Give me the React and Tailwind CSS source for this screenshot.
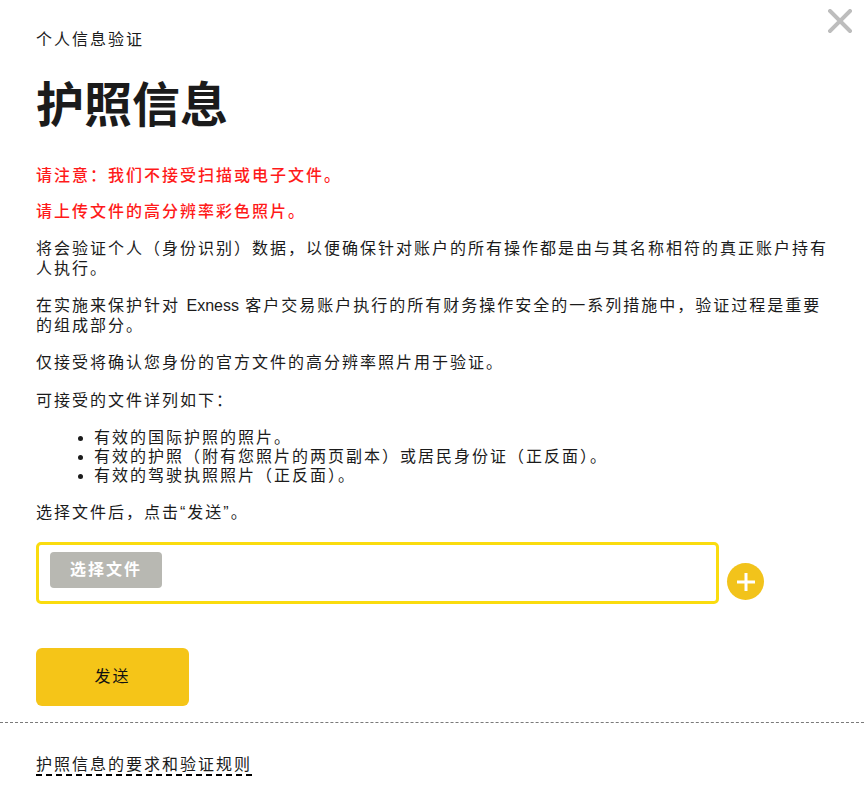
import React from 'react';

export default function App() {
  const textCls = "text-[16px] leading-[20px] tracking-[2px]";

  return (
    <div className="relative min-h-screen bg-white font-['Liberation_Sans','Noto_Sans_CJK_SC',sans-serif] text-[#1b1b1b]">
      {/* Close button */}
      <button className="absolute right-[11px] top-[8px] w-[26px] h-[26px] flex items-center justify-center cursor-pointer">
        <svg width="24" height="24" viewBox="0 0 24 24">
          <path d="M2 2 L22 22 M22 2 L2 22" stroke="#bdbdbd" strokeWidth="4" strokeLinecap="square" />
        </svg>
      </button>

      <div className="pl-9 pr-7 pt-[30px]">
        <p className={textCls}>个人信息验证</p>
        <h1 className="mt-[28px] text-[48px] leading-[56px] font-bold">护照信息</h1>

        <div className={`mt-[32px] flex flex-col gap-[16px] ${textCls}`}>
          <p className="text-[#ff1a1a] font-medium">请注意：我们不接受扫描或电子文件。</p>
          <p className="text-[#ff1a1a] font-medium">请上传文件的高分辨率彩色照片。</p>
          <p className="mt-px">将会验证个人（身份识别）数据，以便确保针对账户的所有操作都是由与其名称相符的真正账户持有人执行。</p>
          <p className="mt-px">在实施来保护针对 <span className="tracking-normal">Exness</span> 客户交易账户执行的所有财务操作安全的一系列措施中，验证过程是重要的组成部分。</p>
          <p className="mt-px">仅接受将确认您身份的官方文件的高分辨率照片用于验证。</p>
          <p className="mt-[2px]">可接受的文件详列如下：</p>
          <ul className="list-disc pl-[58px] leading-[19px] mt-px">
            <li>有效的国际护照的照片。</li>
            <li>有效的护照（附有您照片的两页副本）或居民身份证（正反面）。</li>
            <li>有效的驾驶执照照片（正反面）。</li>
          </ul>
          <p className="mt-[2px]">选择文件后，点击“发送”。</p>
        </div>

        {/* File input row */}
        <div className="mt-[19px] flex items-end gap-[8px]">
          <div className="w-[683px] h-[62px] border-[3px] border-[#FADC0F] rounded-[5px] pl-[11px] pt-[7px]">
            <button className="w-[112px] h-[36px] rounded-[4px] bg-[#B8B8B2] text-white font-bold text-[16px] tracking-[2px] flex items-center justify-center">
              选择文件
            </button>
          </div>
          <button className="mb-[4px] w-[37px] h-[37px] rounded-full bg-[#F2C31B] flex items-center justify-center">
            <svg width="20" height="20" viewBox="0 0 20 20">
              <path d="M10 1 V19 M1 10 H19" stroke="#ffffff" strokeWidth="3" />
            </svg>
          </button>
        </div>

        <button className="mt-[44px] w-[153px] h-[58px] rounded-[6px] bg-[#F5C518] text-[16px] tracking-[2px] text-[#111] flex items-center justify-center">
          发送
        </button>
      </div>

      <div className="mt-[16px] border-t border-dashed border-[#7a7a7a]" />

      <div className="pl-9 pt-[30px] pb-8">
        <a href="#" className="inline-block text-[16px] leading-[18px] tracking-[2px] text-[#1b1b1b] border-b-2 border-dashed border-black">
          护照信息的要求和验证规则
        </a>
      </div>
    </div>
  );
}
